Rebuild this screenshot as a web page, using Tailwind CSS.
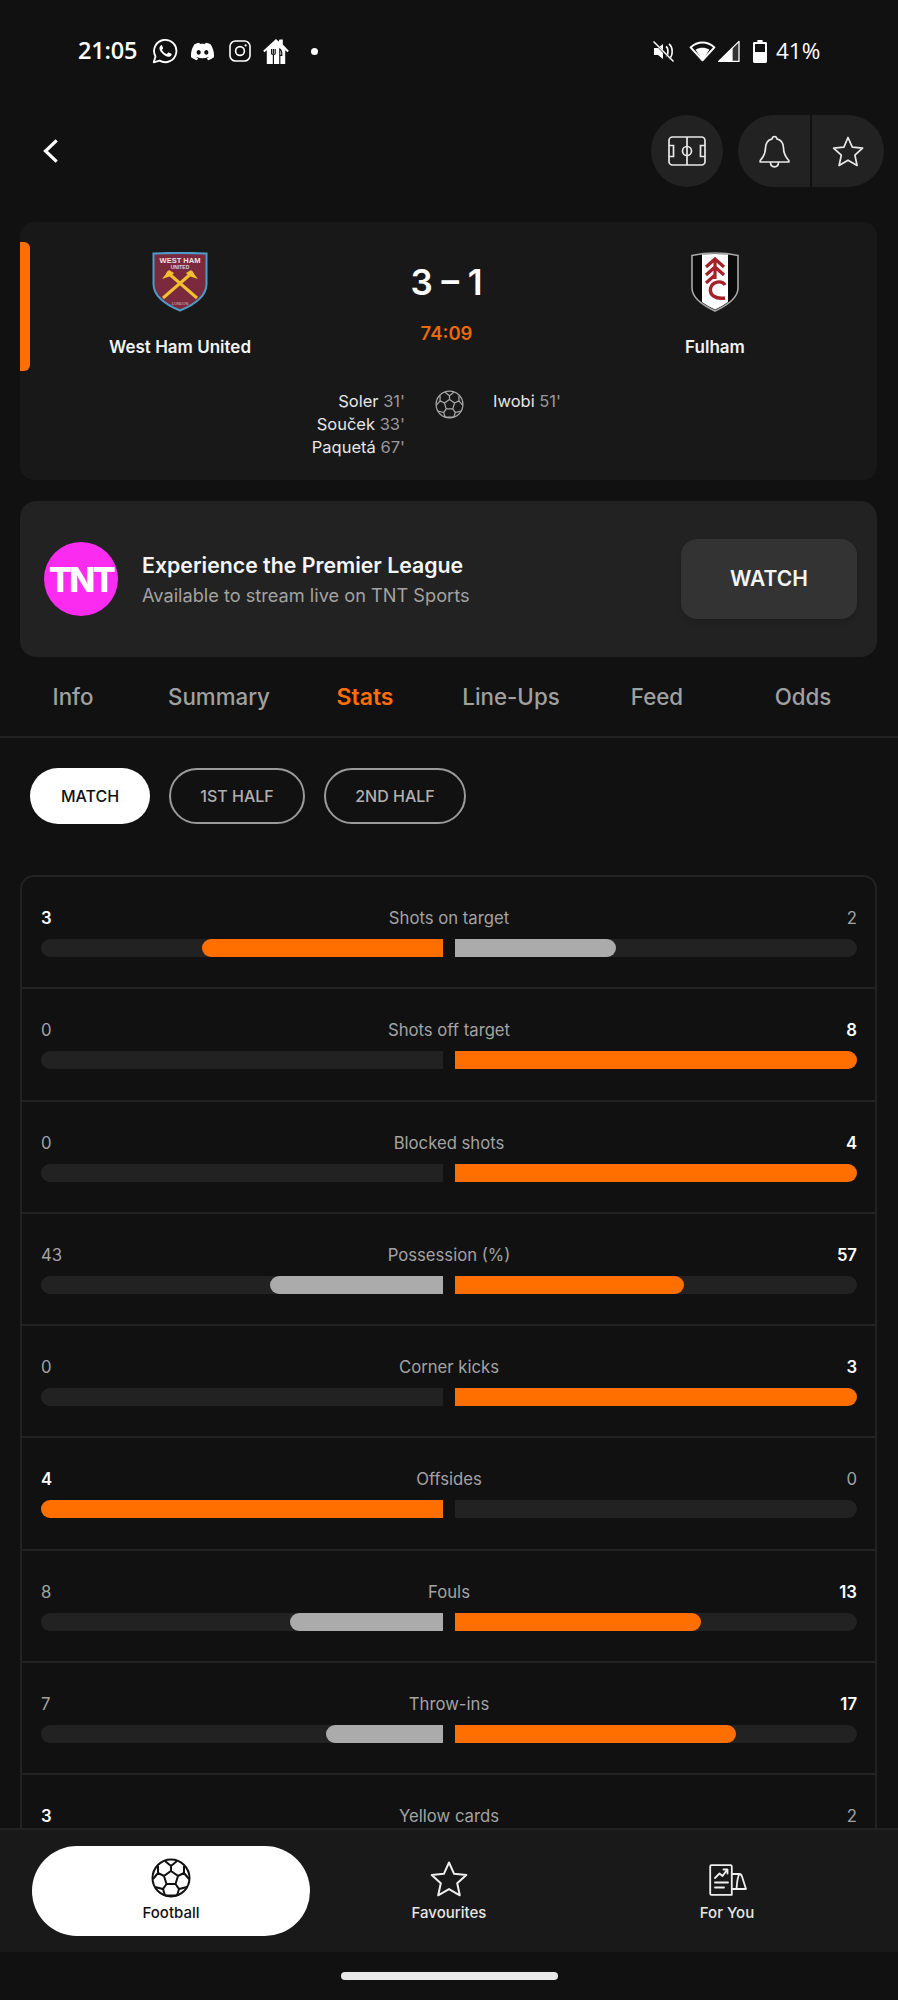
<!DOCTYPE html>
<html lang="en">
<head>
    <meta charset="UTF-8">
    <meta name="viewport" content="width=device-width, initial-scale=1.0">
    <script src="https://cdn.jsdelivr.net/npm/@tailwindcss/browser@4"></script>
    <title>Match Stats</title>
</head>
<body class="bg-[#111111]">
<div class="w-[898px] h-[2000px] flex flex-col overflow-hidden bg-[#111111] text-white font-[family-name:Inter,sans-serif]">
    <div class="flex-1 min-h-0 overflow-hidden">

        <!-- status bar -->
        <div class="h-[102px] relative flex items-center pl-[78px] pr-[78px] text-[23.5px] font-semibold font-[family-name:'Open_Sans',sans-serif]">
            <span class="w-[70px] tracking-[-0.2px]">21:05</span>
            <svg class="w-[26px] h-[26px] ml-[4px]" viewBox="0 0 24 24" fill="none" stroke="white" stroke-width="1.7"><path stroke-linejoin="round" d="M1.6 22.4l1.6-5.4A10.3 10.3 0 1 1 7 20.9z"/><path fill="white" stroke="none" d="M9 6.6c-.3 0-.8.1-1.1.5-.4.5-1 1.2-1 2.5s1 2.6 1.1 2.8c.2.2 2 3 4.8 4.2 2.3.9 2.8.7 3.3.7.5-.1 1.6-.7 1.8-1.3.2-.6.2-1.2.2-1.3-.1-.1-.3-.2-.6-.3l-2-1c-.3-.1-.5-.1-.7.1l-.9 1.1c-.2.2-.3.2-.6.1-.3-.2-1.2-.5-2.3-1.4-.8-.8-1.4-1.7-1.6-2-.2-.3 0-.5.1-.6l.4-.5c.2-.2.2-.3.3-.5.1-.2.1-.4 0-.5l-.9-2.2c-.2-.5-.5-.5-.7-.5z"/></svg>
            <svg class="w-[23px] h-[23px] ml-[13px]" viewBox="0 0 24 24" fill="white"><path d="M20.317 4.3698a19.7913 19.7913 0 00-4.8851-1.5152.0741.0741 0 00-.0785.0371c-.211.3753-.4447.8648-.6083 1.2495-1.8447-.2762-3.68-.2762-5.4868 0-.1636-.3933-.4058-.8742-.6177-1.2495a.077.077 0 00-.0785-.037 19.7363 19.7363 0 00-4.8852 1.515.0699.0699 0 00-.0321.0277C.5334 9.0458-.319 13.5799.0992 18.0578a.0824.0824 0 00.0312.0561c2.0528 1.5076 4.0413 2.4228 5.9929 3.0294a.0777.0777 0 00.0842-.0276c.4616-.6304.8731-1.2952 1.226-1.9942a.076.076 0 00-.0416-.1057c-.6528-.2476-1.2743-.5495-1.8722-.8923a.077.077 0 01-.0076-.1277c.1258-.0943.2517-.1923.3718-.2914a.0743.0743 0 01.0776-.0105c3.9278 1.7933 8.18 1.7933 12.0614 0a.0739.0739 0 01.0785.0095c.1202.099.246.1981.3728.2924a.077.077 0 01-.0066.1276 12.2986 12.2986 0 01-1.873.8914.0766.0766 0 00-.0407.1067c.3604.698.7719 1.3628 1.225 1.9932a.076.076 0 00.0842.0286c1.961-.6067 3.9495-1.5219 6.0023-3.0294a.077.077 0 00.0313-.0552c.5004-5.177-.8382-9.6739-3.5485-13.6604a.061.061 0 00-.0312-.0286zM8.02 15.3312c-1.1825 0-2.1569-1.0857-2.1569-2.419 0-1.3332.9555-2.4189 2.157-2.4189 1.2108 0 2.1757 1.0952 2.1568 2.419 0 1.3332-.9555 2.4189-2.1569 2.4189zm7.9748 0c-1.1825 0-2.1569-1.0857-2.1569-2.419 0-1.3332.9554-2.4189 2.1569-2.4189 1.2108 0 2.1757 1.0952 2.1568 2.419 0 1.3332-.946 2.4189-2.1568 2.4189Z"/></svg>
            <svg class="w-[22px] h-[22px] ml-[15px]" viewBox="0 0 22 22" fill="none" stroke="white" stroke-width="1.6"><rect x="1" y="1" width="20" height="20" rx="5.5"/><circle cx="11" cy="11" r="4.4"/><circle cx="16.6" cy="5.4" r="1.1" fill="white" stroke="none"/></svg>
            <!-- takeaway house -->
            <svg class="w-[26px] h-[26px] ml-[12px]" viewBox="0 0 26 26"><path fill="white" d="M13 1l2.6 2.4.9-2h3.3v5.2l6 6.1-1.3 1.6-2.3-2V26H3.8V12.3l-2.4 2L.2 12.7z"/><path fill="none" stroke="#111111" stroke-width="1.2" d="M8.6 11v4.4M10.4 11v4.4M12.2 11v4.4M8.6 15.4c0 1.4 3.6 1.4 3.6 0M10.4 16.4V26M16.8 26V11c1.8 1 2.2 3.5 2 6.4h-2"/></svg>
            <span class="w-[7px] h-[7px] rounded-full bg-white ml-[22px]"></span>
            <div class="ml-auto flex items-center">
                <svg class="w-[23px] h-[23px]" viewBox="0 0 23 23" fill="none" stroke="white" stroke-width="1.6"><path fill="white" stroke="none" d="M2 8h4l5-4v15l-5-4H2z"/><path d="M14 6.500c2.600 1.500 2.600 8.500 0 10M17 4c4.200 3 4.200 12 0 15"/><path stroke-width="2" stroke="#111111" d="M3 3.200l17 17.600"/><path stroke-width="1.400" d="M1.500 1.600l20 20"/></svg>
                <svg class="w-[27px] h-[22px] ml-[14px]" viewBox="0 0 27 22"><path fill="none" stroke="white" stroke-width="2" d="M1.6 7.4C8.6.9 18.4.9 25.4 7.4L13.5 20.2z" stroke-linejoin="round"/><path fill="white" d="M6.6 9.8c4.4-2.6 9.4-2.6 13.8 0L13.5 20.2z"/></svg>
                <svg class="w-[23px] h-[23px] ml-[1px]" viewBox="0 0 23 23"><path fill="#333" stroke="white" stroke-width="1.3" stroke-linejoin="round" d="M22 1.4V21.4H1.6z"/><path fill="white" d="M15.6 7.6V21.4H1.6z"/></svg>
                <svg class="w-[14px] h-[23px] ml-[13px]" viewBox="0 0 14 23"><path fill="white" d="M4.4 0h5.2v2H12.6c.8 0 1.4.6 1.4 1.4V21.6c0 .8-.6 1.4-1.4 1.4H1.4C.6 23 0 22.4 0 21.6V3.4C0 2.6.6 2 1.4 2H4.4z"/><rect x="2" y="4" width="10" height="8" fill="#111111"/></svg>
                <span class="ml-[9px] w-[44px] whitespace-nowrap text-[22.500px] font-medium">41%</span>
            </div>
        </div>

        <!-- toolbar -->
        <div class="h-[72px] mt-[13px] flex items-center pl-[42px] pr-[14px]">
            <svg class="w-[16px] h-[24px]" viewBox="0 0 16 24" fill="none" stroke="white" stroke-width="3.2" stroke-linecap="square"><path d="M13.5 2.5L3.5 12l10 9.5"/></svg>
            <div class="ml-auto w-[72px] h-[72px] rounded-full bg-[#222222] flex items-center justify-center">
                <svg class="w-[38px] h-[30px]" viewBox="0 0 38 30" fill="none" stroke="#e8e8e8" stroke-width="1.7"><rect x="1" y="1" width="36" height="28" rx="3.5"/><path d="M19 1v28M1 9.5h4.5v11H1M37 9.5h-4.5v11H37"/><circle cx="19" cy="15" r="4.5"/></svg>
            </div>
            <div class="ml-[15px] w-[146px] h-[72px] rounded-full bg-[#222222] flex overflow-hidden">
                <div class="w-[72px] flex items-center justify-center">
                    <svg class="w-[31px] h-[33px]" viewBox="0 0 31 33" fill="none" stroke="#e8e8e8" stroke-width="1.7" stroke-linejoin="round"><path d="M15.5 1.5c1.3 0 2.2.9 2.3 2.3 4.4 1 6.6 4.6 6.7 9.2.1 5.700 2.500 9.500 5.300 12.500v1.500H1.200V25.500C4 22.500 6.400 18.700 6.500 13c.1-4.600 2.300-8.200 6.700-9.200.1-1.400 1-2.300 2.300-2.300z"/><path d="M11.500 27c0 6.500 8 6.500 8 0"/></svg>
                </div>
                <div class="w-[2px] bg-[#111111]"></div>
                <div class="w-[72px] flex items-center justify-center">
                    <svg class="w-[32px] h-[31px]" viewBox="0 0 32 31" fill="none" stroke="#e8e8e8" stroke-width="1.7" stroke-linejoin="round"><path d="M16 1.500l4.300 9.600 10.300 1.100-7.700 7 2.200 10.300L16 24.200l-8.900 5.300 2.200-10.300-7.700-7 10.300-1.100z"/></svg>
                </div>
            </div>
        </div>

        <!-- match card -->
        <div class="mt-[35px] mx-[20px] w-[857px] h-[258px] relative rounded-[14px] bg-[#181818]">
            <div class="absolute left-0 top-[20px] w-[10px] h-[129px] rounded-r-[6px] bg-[#ff6f00]"></div>
            <div class="grid grid-cols-[320px_1fr_324px] pt-[30px]">
                <div class="flex flex-col items-center">
                    <!-- West Ham crest -->
                    <svg class="w-[56px] h-[60px]" viewBox="0 0 56 60">
                        <path fill="#7a2a3c" stroke="#4b9cc9" stroke-width="2" d="M1.500 1.500c17-.8 36-.8 53 0V32c0 13-13 21-26.500 26.500C14.500 53 1.500 45 1.500 32z"/>
                        <text x="28" y="10.500" text-anchor="middle" font-size="7.500" font-weight="700" fill="#efe3e0" font-family="Liberation Sans">WEST HAM</text>
                        <text x="28" y="16.500" text-anchor="middle" font-size="5" font-weight="700" fill="#e0cfcf" font-family="Liberation Sans">UNITED</text>
                        <path fill="none" stroke="#f0c02f" stroke-width="3" d="M15 20l30 26M41 20L11 46"/>
                        <path fill="#f0c02f" d="M10 27l7-9 5 3-3 3zM46 27l-7-9-5 3 3 3z"/>
                        <text x="28" y="53" text-anchor="middle" font-size="3.800" fill="#d9c4c4" font-family="Liberation Sans">LONDON</text>
                    </svg>
                    <div class="mt-[23px] text-[17px] leading-[24px] font-semibold text-[#f2f2f2]">West Ham United</div>
                </div>
                <div class="flex flex-col items-center">
                    <div class="mt-[8px] h-[44px] leading-[44px] text-[35px] font-semibold">3 – 1</div>
                    <div class="mt-[17px] h-[24px] leading-[24px] text-[18.500px] font-semibold text-[#e86a0c]">74:09</div>
                </div>
                <div class="flex flex-col items-center">
                    <!-- Fulham crest -->
                    <svg class="w-[48px] h-[60px]" viewBox="0 0 48 60">
                        <path fill="#0a0a0a" stroke="#a8a8a8" stroke-width="1.600" d="M1 3.500c14-3 32-3 46 0V36c0 10-10 17-23 23C11 53 1 46 1 36z"/>
                        <path fill="#ffffff" d="M11 2.600c8-.8 18-.8 26 0V50c-4 3-8 5-13 7.500-5-2.500-9-4.500-13-7.500z"/>
                        <path fill="none" stroke="#a5212a" stroke-width="3.200" d="M15 15l9-8 9 8M15 23l9-8 9 8M15 31l9-8M24 7v20"/>
                        <path fill="none" stroke="#a5212a" stroke-width="3.400" d="M34 33c-3-5-13-4-14.500 3.500-1 6.500 5 11 14.500 9.500"/>
                    </svg>
                    <div class="mt-[23px] text-[17px] leading-[24px] font-semibold text-[#f2f2f2]">Fulham</div>
                </div>
            </div>
            <div class="mt-[31px] grid grid-cols-[385px_88px_1fr] text-[16.500px] leading-[23px] text-[#e6e6e6]">
                <div class="text-right">
                    <div>Soler <span class="text-[#9a9a9a]">31'</span></div>
                    <div>Souček <span class="text-[#9a9a9a]">33'</span></div>
                    <div>Paquetá <span class="text-[#9a9a9a]">67'</span></div>
                </div>
                <div class="flex justify-center">
                    <svg class="w-[29px] h-[29px]" viewBox="0 0 40 40" fill="none" stroke="#a8a8a8" stroke-width="1.700"><circle cx="20" cy="20" r="18.500"/><path d="M20 13l7 5-2.500 8h-9L13 18zM20 13V8l-6-5M20 8l6-5M27 18l6-3 0-7M33 15l5 6M13 18l-6-3 0-7M7 15l-5 6M24.500 26l3.500 5 8-2M28 31l-2 6.500M15.500 26L12 31l-8-2M12 31l2 6.500M14 37.500h12"/></svg>
                </div>
                <div>
                    <div>Iwobi <span class="text-[#9a9a9a]">51'</span></div>
                </div>
            </div>
        </div>

        <!-- TNT banner -->
        <div class="mt-[21px] mx-[20px] w-[857px] h-[156px] rounded-[16px] bg-[#222222] flex items-center pl-[24px] pr-[20px]">
            <div class="w-[74px] h-[74px] rounded-full bg-[#fb2bef] flex items-center justify-center text-white text-[34px] font-extrabold tracking-[-2.500px]">TNT</div>
            <div class="ml-[24px]">
                <div class="text-[21.300px] leading-[28px] font-semibold text-[#f5f5f5]">Experience the Premier League</div>
                <div class="mt-[4px] text-[18.200px] leading-[24px] text-[#a3a3a3]">Available to stream live on TNT Sports</div>
            </div>
            <div class="ml-auto w-[176px] h-[80px] rounded-[16px] bg-[#333333] shadow-md flex items-center justify-center text-[21px] font-semibold text-[#f5f5f5]">WATCH</div>
        </div>

        <!-- tabs -->
        <div class="h-[81px] border-b-2 border-[#222222]">
            <div class="w-[876px] grid grid-cols-6 text-center pt-[26px] text-[22.300px] leading-[28px] font-medium text-[#a0a0a0]">
                <div>Info</div>
                <div>Summary</div>
                <div class="font-semibold text-[23px] text-[#ff6f00]">Stats</div>
                <div>Line-Ups</div>
                <div>Feed</div>
                <div>Odds</div>
            </div>
        </div>

        <!-- period pills -->
        <div class="mt-[30px] ml-[30px] flex gap-[19px] text-[16px] font-medium">
            <div class="w-[120px] h-[56px] rounded-full bg-white text-[#111111] flex items-center justify-center">MATCH</div>
            <div class="w-[136px] h-[56px] rounded-full border-2 border-[#9a9a9a] text-[#b0b0b0] flex items-center justify-center">1ST HALF</div>
            <div class="w-[142px] h-[56px] rounded-full border-2 border-[#9a9a9a] text-[#b0b0b0] flex items-center justify-center">2ND HALF</div>
        </div>

        <!-- stats list -->
        <div id="stats" class="mt-[51px] mx-[20px] w-[857px] rounded-t-[14px] border-2 border-[#222222]"></div>
    </div>

    <!-- bottom nav -->
    <div class="h-[124px] border-t-2 border-[#222222] bg-[#191919] grid grid-cols-[278px_278px_278px] pl-[32px] pt-[16px]">
        <div class="h-[90px] rounded-full bg-white flex flex-col items-center text-[#111111]">
            <svg class="w-[40px] h-[40px] mt-[12px]" viewBox="0 0 40 40" fill="none" stroke="#111111" stroke-width="2"><circle cx="20" cy="20" r="18.500"/><path d="M20 13l7 5-2.500 8h-9L13 18zM20 13V8l-6-5M20 8l6-5M27 18l6-3 0-7M33 15l5 6M13 18l-6-3 0-7M7 15l-5 6M24.500 26l3.500 5 8-2M28 31l-2 6.500M15.500 26L12 31l-8-2M12 31l2 6.500M14 37.500h12"/></svg>
            <span class="mt-[5px] text-[15px] leading-[20px] font-medium">Football</span>
        </div>
        <div class="h-[90px] flex flex-col items-center text-[#e6e6e6]">
            <svg class="w-[38px] h-[36px] mt-[15px]" viewBox="0 0 38 36" fill="none" stroke="#efefef" stroke-width="2" stroke-linejoin="round"><path d="M19 1.500l5.100 11.300 12.200 1.300-9.100 8.200 2.600 12-10.800-6.200-10.800 6.200 2.600-12-9.100-8.200 12.200-1.300z"/></svg>
            <span class="mt-[6px] text-[15px] leading-[20px] font-medium">Favourites</span>
        </div>
        <div class="h-[90px] flex flex-col items-center text-[#e6e6e6]">
            <svg class="w-[38px] h-[32px] mt-[18px] ml-[2px]" viewBox="0 0 38 32" fill="none" stroke="#efefef" stroke-width="1.800" stroke-linejoin="round" stroke-linecap="round"><path d="M2.500 1.200h19c.700 0 1.300.6 1.300 1.300v28.300H2.500c-.700 0-1.300-.6-1.300-1.300V2.500c0-.7.600-1.300 1.300-1.300z"/><path d="M23 10h7.500c1.500 0 2 1 2.500 2.500L37 25H23M30.500 10c-1.800 2-2.500 8-3 15"/><path d="M6 14l4.500-4.500 3 2.500 4.500-6M14.500 5.500H18.500v4M6 18.500h13M6 23.500h9"/></svg>
            <span class="mt-[7px] text-[15px] leading-[20px] font-medium">For You</span>
        </div>
    </div>

    <!-- home indicator -->
    <div class="h-[48px] pt-[20px] flex justify-center">
        <div class="w-[217px] h-[8px] rounded-full bg-[#e8e8e8]"></div>
    </div>
</div>

<script>
    // label, home, away, home bar %, away bar %
    const stats = [
        ['Shots on target', 3, 2, 60, 40],
        ['Shots off target', 0, 8, 0, 100],
        ['Blocked shots', 0, 4, 0, 100],
        ['Possession (%)', 43, 57, 43, 57],
        ['Corner kicks', 0, 3, 0, 100],
        ['Offsides', 4, 0, 100, 0],
        ['Fouls', 8, 13, 38, 61.3],
        ['Throw-ins', 7, 17, 29, 70],
        ['Yellow cards', 3, 2, 60, 40]
    ];

    const statsDiv = document.getElementById('stats');

    stats.forEach(([label, home, away, homePct, awayPct], i) => {
        const homeLeads = home > away;
        const row = document.createElement('div');
        // the card's own top border stands in for the first row's divider
        row.className = i ? 'h-[112.3px] pl-[19px] pr-[18px] pt-[29px] border-t-2 border-[#222222]' : 'h-[110.3px] pl-[19px] pr-[18px] pt-[29px]';
        row.innerHTML = `
            <div class="grid grid-cols-[1fr_auto_1fr] h-[24px] leading-[24px] text-[16.700px] text-[#a3a3a3]">
                <span class="${homeLeads ? 'text-white font-semibold' : ''}">${home}</span>
                <span>${label}</span>
                <span class="text-right ${homeLeads ? '' : 'text-white font-semibold'}">${away}</span>
            </div>
            <div class="mt-[9px] grid grid-cols-2 gap-[12px] h-[18px]">
                <div class="flex justify-end rounded-l-full bg-[#222222]">
                    <div class="rounded-l-full ${homeLeads ? 'bg-[#ff6f00]' : 'bg-[#ababab]'}" style="width:${homePct}%"></div>
                </div>
                <div class="flex rounded-r-full bg-[#222222]">
                    <div class="rounded-r-full ${homeLeads ? 'bg-[#ababab]' : 'bg-[#ff6f00]'}" style="width:${awayPct}%"></div>
                </div>
            </div>
        `;
        statsDiv.appendChild(row);
    });
</script>
</body>
</html>
